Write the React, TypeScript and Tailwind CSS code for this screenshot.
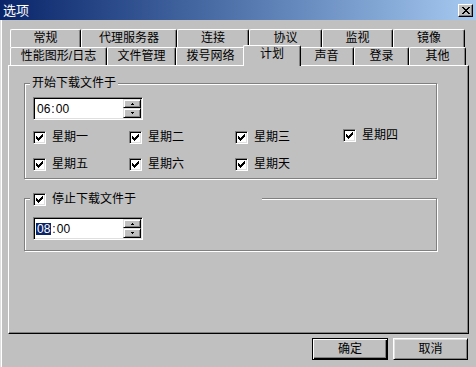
import React from "react";

function CheckMark() {
  return (
    <svg width="7" height="7" viewBox="0 0 7 7" shapeRendering="crispEdges" fill="#000">
      <rect x="6" y="0" width="1" height="1" />
      <rect x="5" y="1" width="2" height="1" />
      <rect x="0" y="2" width="1" height="1" />
      <rect x="4" y="2" width="3" height="1" />
      <rect x="0" y="3" width="2" height="1" />
      <rect x="3" y="3" width="3" height="1" />
      <rect x="0" y="4" width="5" height="1" />
      <rect x="1" y="5" width="3" height="1" />
      <rect x="2" y="6" width="1" height="1" />
    </svg>
  );
}

function CheckBox() {
  return (
    <span className="w-[13px] h-[13px] shrink-0 bg-white border border-t-[#808080] border-l-[#808080] border-r-white border-b-white shadow-[inset_1px_1px_0_#000,inset_-1px_-1px_0_#dfdfdf] flex items-center justify-center">
      <CheckMark />
    </span>
  );
}

function Item({ label, className = "" }: { label: string; className?: string }) {
  return (
    <div className={"flex items-center gap-[6px] h-[13px] " + className}>
      <CheckBox />
      <span className="text-[12px] leading-[13px] whitespace-nowrap">{label}</span>
    </div>
  );
}

function SpinBtn({ up, tall }: { up?: boolean; tall?: boolean }) {
  return (
    <div
      className={
        "bg-[#c0c0c0] border-t border-l border-t-[#dfdfdf] border-l-[#dfdfdf] border-r border-b border-r-black border-b-black shadow-[inset_1px_1px_0_#fff,inset_-1px_-1px_0_#808080] flex items-center justify-center " +
        (tall ? "h-[10px]" : "h-[9px]")
      }
    >
      <svg width="3" height="2" viewBox="0 0 3 2" shapeRendering="crispEdges" fill="#000">
        {up ? (
          <>
            <rect x="1" y="0" width="1" height="1" />
            <rect x="0" y="1" width="3" height="1" />
          </>
        ) : (
          <>
            <rect x="0" y="0" width="3" height="1" />
            <rect x="1" y="1" width="1" height="1" />
          </>
        )}
      </svg>
    </div>
  );
}

function TimeField({ hl }: { hl?: boolean }) {
  return (
    <div className="w-[110px] h-[23px] bg-white border border-t-[#808080] border-l-[#808080] border-r-white border-b-white shadow-[inset_1px_1px_0_#000,inset_-1px_-1px_0_#dfdfdf] flex items-center pl-[2px] pr-[1px] py-[1px]">
      <div className="flex-1 text-[12px] leading-[12px] flex items-center">
        {hl ? (
          <span className="bg-[#0a246a] text-white px-[1px] inline-block h-[12px] leading-[12px]">08</span>
        ) : (
          <span className="pl-[1px]">06</span>
        )}
        <span className="mx-[1px]">:</span>
        <span>00</span>
      </div>
      <div className="flex flex-col w-[18px] h-full">
        <SpinBtn up />
        <SpinBtn tall />
      </div>
    </div>
  );
}

function Tab({ label, w }: { label: string; w: string }) {
  return (
    <div
      className={
        "h-full shrink-0 border-t border-l border-r border-t-white border-l-white border-r-black rounded-tl-[2px] rounded-tr-[2px] shadow-[inset_-1px_0_0_#808080] flex items-center justify-center text-[12px] leading-[13px] " +
        w
      }
    >
      {label}
    </div>
  );
}

function Button({ label, def }: { label: string; def?: boolean }) {
  return (
    <div
      className={
        "h-[22px] flex items-center justify-center text-[12px] leading-[13px] " +
        (def
          ? "w-[76px] border border-black shadow-[inset_1px_1px_0_#fff,inset_-1px_-1px_0_#000,inset_-2px_-2px_0_#808080]"
          : "w-[75px] border-t border-l border-t-white border-l-white border-r border-b border-r-black border-b-black shadow-[inset_1px_1px_0_#dfdfdf,inset_-1px_-1px_0_#808080]")
      }
    >
      {label}
    </div>
  );
}

function CloseX() {
  return (
    <svg width="8" height="7" viewBox="0 0 8 7" shapeRendering="crispEdges" fill="#000">
      <rect x="0" y="0" width="2" height="1" />
      <rect x="6" y="0" width="2" height="1" />
      <rect x="1" y="1" width="2" height="1" />
      <rect x="5" y="1" width="2" height="1" />
      <rect x="2" y="2" width="4" height="1" />
      <rect x="3" y="3" width="2" height="1" />
      <rect x="2" y="4" width="4" height="1" />
      <rect x="1" y="5" width="2" height="1" />
      <rect x="5" y="5" width="2" height="1" />
      <rect x="0" y="6" width="2" height="1" />
      <rect x="6" y="6" width="2" height="1" />
    </svg>
  );
}

export default function App() {
  return (
    <div className="w-[476px] h-[367px] bg-[#c0c0c0] text-black flex flex-col overflow-hidden [font-family:'Liberation_Sans','Noto_Sans_CJK_SC',sans-serif]">
      {/* title bar */}
      <div className="h-[20px] shrink-0 bg-linear-to-r from-[#0a246a] to-[#a6caf0] flex items-center pl-[3px] pr-[3px]">
        <span className="text-white text-[13px] leading-[14px] pt-[2px]">选项</span>
        <div className="ml-auto w-[15px] h-[13px] bg-[#c0c0c0] border-t border-l border-t-white border-l-white border-r border-b border-r-black border-b-black shadow-[inset_-1px_-1px_0_#808080] flex items-center justify-center">
          <CloseX />
        </div>
      </div>

      {/* body */}
      <div className="flex-1 flex flex-col shadow-[inset_1px_0_0_#dfdfdf,inset_2px_0_0_#fff]">
        {/* tab row 1 */}
        <div className="mt-[9px] ml-[10px] h-[18px] flex">
          <Tab label="常规" w="w-[71px]" />
          <Tab label="代理服务器" w="w-[96px]" />
          <Tab label="连接" w="w-[72px]" />
          <Tab label="协议" w="w-[73px]" />
          <Tab label="监视" w="w-[71px]" />
          <Tab label="镜像" w="w-[72px]" />
        </div>
        {/* tab row 2 */}
        <div className="ml-[10px] h-[18px] flex items-end">
          <Tab label="性能图形/日志" w="w-[97px]" />
          <Tab label="文件管理" w="w-[69px]" />
          <Tab label="拨号网络" w="w-[69px]" />
          <div className="relative z-10 shrink-0 w-[58px] h-[21px] -mx-[2px] mb-[-1px] pb-[3px] bg-[#c0c0c0] border-t border-l border-r border-t-white border-l-white border-r-black rounded-tl-[2px] rounded-tr-[2px] shadow-[inset_-1px_0_0_#808080] flex items-center justify-center text-[12px] leading-[13px]">
            计划
          </div>
          <Tab label="声音" w="w-[55px]" />
          <Tab label="登录" w="w-[55px]" />
          <Tab label="其他" w="w-[57px]" />
        </div>

        {/* panel */}
        <div className="ml-[8px] w-[461px] h-[269px] shrink-0 border-t border-l border-t-white border-l-white border-r border-b border-r-black border-b-black shadow-[inset_-1px_-1px_0_#808080] pt-[17px] pl-[15px]">
          {/* group 1 */}
          <div className="relative w-[413px] border border-[#808080] shadow-[inset_1px_1px_0_#fff,1px_1px_0_#fff] pl-[8px] pt-[13px] pb-[7px]">
            <div className="absolute left-[5px] top-[-7px] px-[2px] bg-[#c0c0c0] text-[12px] leading-[13px]">
              开始下载文件于
            </div>
            <TimeField />
            <div className="mt-[11px] flex items-center">
              <Item label="星期一" className="w-[96px]" />
              <Item label="星期二" className="w-[106px]" />
              <Item label="星期三" className="w-[108px]" />
              <Item label="星期四" className="-mt-[4px]" />
            </div>
            <div className="mt-[14px] flex items-center">
              <Item label="星期五" className="w-[96px]" />
              <Item label="星期六" className="w-[106px]" />
              <Item label="星期天" className="w-[108px]" />
            </div>
          </div>

          {/* group 2 */}
          <div className="relative mt-[19px] w-[413px] border border-[#808080] shadow-[inset_1px_1px_0_#fff,1px_1px_0_#fff] pl-[8px] pt-[18px] pb-[10px]">
            <div className="absolute left-[5px] top-[-7px] w-[232px] h-[14px] pl-[3px] pt-[1px] bg-[#c0c0c0]">
              <Item label="停止下载文件于" />
            </div>
            <TimeField hl />
          </div>
        </div>

        {/* buttons */}
        <div className="mt-[4px] pr-[8px] flex justify-end gap-[5px]">
          <Button label="确定" def />
          <Button label="取消" />
        </div>
      </div>
    </div>
  );
}
